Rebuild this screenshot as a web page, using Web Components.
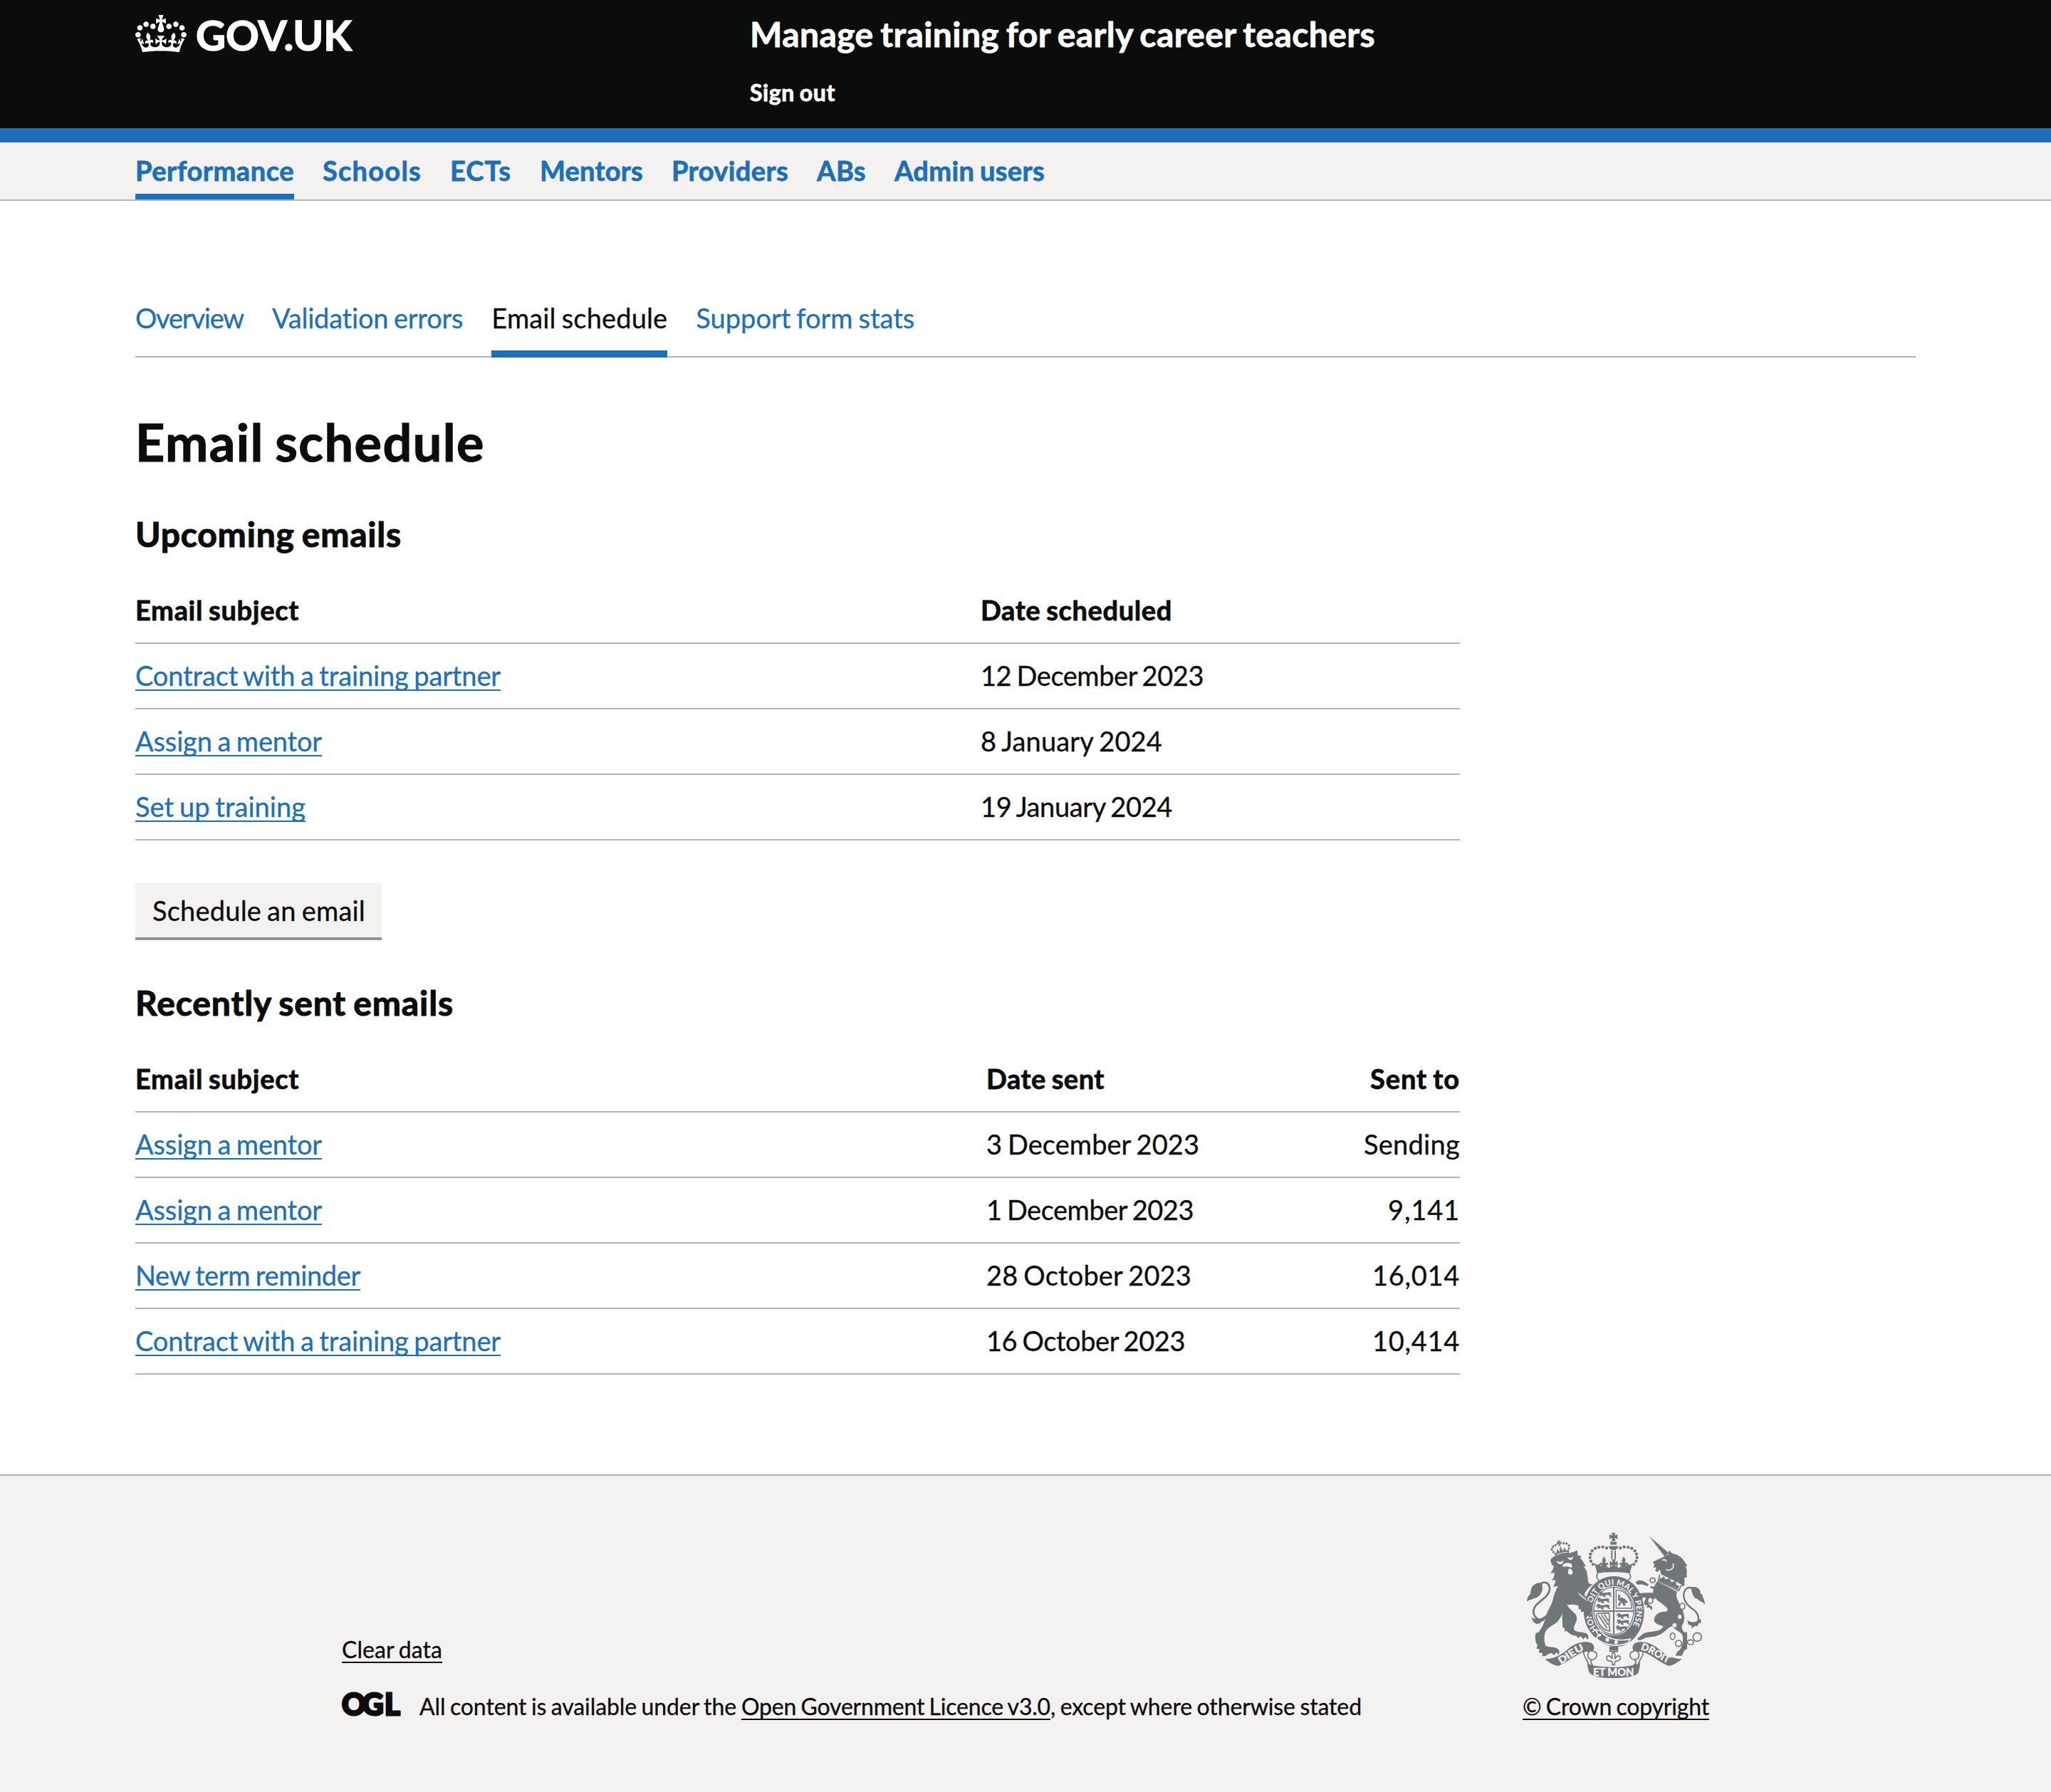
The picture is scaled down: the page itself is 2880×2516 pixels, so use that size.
<!DOCTYPE html>
<html lang="en">
<head>
<meta charset="utf-8">
<title>Email schedule - Manage training for early career teachers</title>
<style>
  html, body { margin: 0; padding: 0; background: #fff; }
  body { font-family: Lato, "Noto Sans", sans-serif; font-size: 38px; line-height: 50px; color: #0b0c0c; }
</style>
</head>
<body>
<app-page></app-page>

<script>
const define = (name, html, setup) => {
  const template = document.createElement('template');
  template.innerHTML = html;
  customElements.define(name, class extends HTMLElement {
    connectedCallback() {
      if (this.shadowRoot) return;
      this.attachShadow({ mode: 'open' }).append(template.content.cloneNode(true));
      if (setup) setup(this);
    }
  });
};

/* Text run tracked so that it fills a set measure. */
define('tracked-text', `
<style>
  :host { display: inline-block; white-space: nowrap; padding-top: 1px; margin-bottom: -1px; word-spacing: -.05em; -webkit-text-stroke: var(--weight, .3px) currentColor; }
  :host([link]) { color: #1d70b8; }
  :host([underline]) { text-decoration: underline; text-decoration-thickness: 2px; text-underline-offset: 5px; text-decoration-skip-ink: none; }
</style><slot></slot>`, el => {
  const target = Number(el.getAttribute('measure'));
  if (!target) return;
  const natural = el.getBoundingClientRect().width;
  const count = el.textContent.length;
  el.style.letterSpacing = ((target - natural) / count).toFixed(3) + 'px';
});

define('gov-logo', `
<style>:host { display: block; width: 310px; height: 54px; } svg { display: block; overflow: visible; }</style>
<svg width="310" height="54" viewBox="0 0 310 54" fill="#fff">
  <g transform="scale(.5455)"><path d="M25 30.2c3.5 1.5 7.7-.2 9.1-3.7 1.5-3.6-.2-7.8-3.9-9.2-3.6-1.4-7.6.3-9.1 3.9-1.4 3.5.3 7.5 3.9 9zM9 39.5c3.6 1.5 7.8-.2 9.2-3.7 1.5-3.6-.2-7.8-3.9-9.1-3.6-1.5-7.6.2-9.1 3.8-1.4 3.5.3 7.5 3.8 9zM4.4 57.2c3.5 1.5 7.7-.2 9.1-3.8 1.5-3.6-.2-7.7-3.9-9.1-3.5-1.5-7.6.3-9.1 3.8-1.4 3.5.3 7.6 3.9 9.1zm38.3-21.4c3.5 1.5 7.7-.2 9.1-3.8 1.5-3.6-.2-7.7-3.9-9.1-3.6-1.5-7.6.3-9.1 3.8-1.3 3.6.4 7.7 3.9 9.1zm64.4-5.6c-3.6 1.5-7.8-.2-9.1-3.7-1.5-3.6.2-7.8 3.8-9.2 3.6-1.4 7.7.3 9.2 3.9 1.3 3.5-.4 7.5-3.9 9zm15.9 9.3c-3.6 1.5-7.7-.2-9.1-3.7-1.5-3.6.2-7.8 3.7-9.1 3.6-1.5 7.7.2 9.2 3.8 1.5 3.5-.3 7.5-3.8 9zm4.7 17.7c-3.6 1.5-7.8-.2-9.2-3.8-1.5-3.6.2-7.7 3.9-9.1 3.6-1.5 7.7.3 9.2 3.8 1.3 3.5-.4 7.6-3.9 9.1zM89.3 35.8c-3.6 1.5-7.8-.2-9.2-3.8-1.4-3.6.2-7.7 3.9-9.1 3.6-1.5 7.7.3 9.2 3.8 1.4 3.6-.3 7.7-3.9 9.1zM69.7 17.7l8.9 4.7V9.3l-8.9 2.8c-.2-.3-.5-.6-.9-.9L72.4 0H59.6l3.5 11.2c-.3.3-.6.5-.9.9l-8.8-2.8v13.1l8.8-4.7c.3.3.6.7.9.9l-5 15.4v.1c-.2.8-.4 1.6-.4 2.4 0 4.1 3.1 7.5 7 8.1h.2c.3 0 .7.1 1 .1.4 0 .7 0 1-.1h.2c4-.6 7.1-4.1 7.1-8.1 0-.8-.1-1.7-.4-2.4V34l-5.1-15.4c.4-.2.7-.6 1-.9zM66 92.8c16.9 0 32.8 1.1 47.1 3.2 4-16.9 8.9-26.7 14-33.5l-9.6-3.4c1 4.9 1.1 7.2 0 10.2-1.5-1.4-3-4.3-4.2-8.7L108.6 76c2.8-2 5-3.2 7.5-3.3-4.4 9.4-10 11.9-13.6 11.2-4.3-.8-6.3-4.6-5.6-7.9 1-4.7 5.7-5.9 8-.5 4.3-8.7-3-11.4-7.6-8.8 7.1-7.2 7.9-13.5 2.1-21.1-8 6.1-8.1 12.3-4.5 20.8-4.7-5.4-12.1-2.5-9.5 6.2 3.4-5.2 7.9-2 7.2 3.1-.6 4.3-6.4 7.8-13.5 7.2-10.3-.9-10.9-8-11.2-13.8 2.5-.5 7.1 1.8 11 7.3L80.2 60c-4.1 4.4-8 5.3-12.3 5.4 1.4-4.4 8-11.6 8-11.6H55.5s6.4 7.2 7.9 11.6c-4.2-.1-8-1-12.3-5.4l1.4 16.4c3.9-5.5 8.5-7.7 10.9-7.3-.3 5.8-.9 12.8-11.1 13.8-7.2.6-12.9-2.9-13.5-7.2-.7-5 3.8-8.3 7.1-3.1 2.7-8.7-4.6-11.6-9.4-6.2 3.7-8.5 3.6-14.7-4.6-20.8-5.8 7.6-5 13.9 2.2 21.1-4.7-2.6-11.9.1-7.7 8.8 2.3-5.5 7.1-4.2 8.1.5.7 3.3-1.3 7.1-5.7 7.9-3.5.7-9-1.8-13.5-11.2 2.5.1 4.7 1.3 7.5 3.3l-4.7-15.4c-1.2 4.4-2.7 7.2-4.3 8.7-1.1-3-.9-5.3 0-10.2l-9.5 3.4c5 6.9 9.9 16.7 14 33.5 14.8-2.1 30.8-3.2 47.7-3.2z"/></g>
  <text x="85" y="50" font-family="Lato, sans-serif" font-weight="700" font-size="57.5" textLength="219" lengthAdjust="spacingAndGlyphs" stroke="#fff" stroke-width="1.5">GOV.UK</text>
</svg>`);

define('gov-header', `
<style>
  :host { display: flex; box-sizing: border-box; height: 200px; padding: 0 190px; background: #0b0c0c; border-bottom: 20px solid #1d70b8; color: #fff; font-weight: 700; --weight: .8px; }
  .logo { width: 863px; padding-top: 21px; }
  .service { display: flex; flex-direction: column; align-items: flex-start; gap: 32px; padding-top: 17px; font-size: 48px; line-height: 60px; }
  .sub { font-size: 32px; line-height: 40px; }
</style>
<div class="logo"><gov-logo></gov-logo></div>
<div class="service">
  <tracked-text measure="878">Manage training for early career teachers</tracked-text>
  <tracked-text class="sub" measure="120">Sign out</tracked-text>
</div>`);

define('primary-nav', `
<style>
  :host { display: flex; gap: 40px; box-sizing: border-box; height: 82px; padding: 0 190px; background: #f3f2f1; border-bottom: 2px solid #b1b4b6; font-weight: 700; --weight: .8px; }
</style><slot></slot>`);

define('nav-item', `
<style>
  :host { display: block; box-sizing: border-box; height: 80px; padding-top: 13px; border-bottom: 8px solid transparent; color: #1d70b8; white-space: nowrap; }
  :host([current]) { border-color: #1d70b8; }
</style><slot></slot>`);

define('sub-nav', `
<style>:host { display: flex; gap: 40px; border-bottom: 2px solid #b1b4b6; }</style><slot></slot>`);

define('sub-item', `
<style>
  :host { display: block; height: 72px; margin-bottom: -2px; border-bottom: 10px solid transparent; color: #1d70b8; }
  :host([current]) { color: #0b0c0c; border-color: #1d70b8; }
</style><slot></slot>`);

define('data-table', `
<style>:host { display: block; width: 1860px; margin-top: 51px; }</style><slot></slot>`);

define('table-row', `
<style>
  :host { display: grid; box-sizing: border-box; height: 92px; grid-template-columns: var(--columns); padding-top: 18px; border-bottom: 2px solid #b1b4b6; }
  :host([head]) { height: 74px; padding-top: 0; font-weight: 700; --weight: .8px; }
  ::slotted(*) { justify-self: start; }
  ::slotted([end]) { justify-self: end; }
</style><slot></slot>`);

define('action-button', `
<style>
  :host { display: block; box-sizing: border-box; width: 346px; height: 80px; padding: 12px 24px 0; background: #f3f2f1; border-bottom: 4px solid #929191; }
</style><slot></slot>`);

define('ogl-logo', `
<style>:host { display: block; width: 82px; height: 34px; } svg { display: block; overflow: visible; }</style>
<svg width="82" height="34" viewBox="0 0 82 34">
  <text x="0 28.5 60" y="31.8" font-family="Lato, sans-serif" font-weight="900" font-size="41.5" fill="#0b0c0c" stroke="#0b0c0c" stroke-width="3">OGL</text>
</svg>`);

define('royal-arms', `
<style>:host { display: block; width: 250px; height: 204px; } svg { display: block; }</style>
<svg width="250" height="204" viewBox="72 66 750 612" fill="#6f777b">
  <defs>
    <path id="motto" d="M371 474A95 110 0 1 1 511 467"/>
    <path id="dieu" d="M215 620C252 600 284 566 326 558"/>
    <path id="droit" d="M550 558C590 566 630 602 672 618"/>
    <path id="fleur" d="M0-24C9-12 9-4 4 6C14-2 20 4 17 12L10 10C10 15 14 19 20 22H-20C-14 19-10 15-10 10L-17 12C-20 4-14-2-4 6C-9-4-9-12 0-24Z"/>
    <path id="cross" d="M-9-18H9L4-5L17-10V10L4 5L9 18H-9L-4 5L-17 10V-10L-4-5Z"/>
    <path id="beast" d="M2 4L16 2L22 8L50 4L56 10L52 16L60 22L50 22L44 15L30 17L34 25L24 25L20 18L8 22L10 14L0 14L8 9Z"/>
    <g id="scroll">
      <path d="M148 598C190 598 225 575 250 552C275 532 310 520 340 529C358 536 359 556 350 566L314 568C285 575 245 610 205 627C182 624 165 612 148 598Z"/>
      <path d="M312 567C308 590 328 595 332 622M350 565C378 572 366 596 350 600C336 606 342 618 350 624M336 567C324 575 326 598 346 601" fill="none" stroke="#6f777b" stroke-width="5"/>
    </g>
  </defs>

  <!-- lion -->
  <path d="M135 437C100 428 92 400 108 375C125 350 166 338 168 303C168 276 148 270 128 280" fill="none" stroke="#6f777b" stroke-width="8"/>
  <path d="M138 278C112 272 94 290 92 298C88 306 92 312 84 318L90 320C80 330 72 340 72 357C82 345 96 350 98 343C112 344 128 332 134 316C142 302 134 292 138 278Z"/>
  <path d="M90 420C100 432 130 436 158 408C154 430 144 438 134 440C124 452 116 448 112 450C104 444 98 446 90 420Z"/>
  <path d="M172 182C176 168 190 161 215 158C240 155 262 150 285 140L286 160L303 166L296 172C308 182 312 196 322 208L310 208C322 220 326 230 326 242C330 258 328 268 334 280L350 284C335 292 325 305 314 325C320 340 335 350 345 362C346 380 340 400 344 412L336 424L330 414L320 424L312 412L314 396L302 402L300 388L292 390L294 376C285 370 270 366 241 370C250 385 262 395 270 402C282 410 285 425 280 440C274 455 266 462 272 476C285 486 300 482 318 488C330 492 335 502 328 517L318 504L310 516L300 502L288 510L280 500C262 500 250 490 240 480L230 482L232 470L222 462C224 440 218 425 222 405C216 420 206 440 190 450C170 462 150 472 147 495C144 515 146 530 152 542C165 550 180 544 198 552C212 560 210 572 206 580L196 570L186 582L176 572L160 578L150 586L136 586L138 574L123 570L124 556L112 554L117 540C107 530 105 500 110 488L120 486C135 470 148 440 152 420C155 400 172 380 180 355C185 335 190 310 205 290L182 294C190 285 192 275 192 265L176 266C188 255 188 245 188 235L172 236C182 222 184 215 186 205C176 205 174 192 172 182Z"/>
  <g fill="#f3f2f1">
    <path d="M197 183C208 192 220 190 228 180L222 196C210 202 200 196 197 183Z"/>
    <path d="M242 167C252 174 262 172 268 164L264 178C254 184 246 178 242 167Z"/>
    <path d="M222 202C236 190 252 190 262 200L262 214L242 208L226 210Z"/>
    <path d="M248 218C262 216 270 232 262 241C252 246 242 238 246 228Z"/>
  </g>
  <g transform="rotate(-13 218 135)">
    <use href="#cross" transform="translate(214 108) scale(.6)"/>
    <g><circle cx="197" cy="113" r="5"/><circle cx="185" cy="117" r="5"/><circle cx="178" cy="127" r="5"/><circle cx="182" cy="139" r="5"/><circle cx="232" cy="113" r="5"/><circle cx="244" cy="117" r="5"/><circle cx="252" cy="127" r="5"/><circle cx="249" cy="139" r="5"/></g>
    <path d="M184 143L194 146L200 130L208 145L215 120L222 145L231 130L236 146L248 143L243 164C225 158 207 158 188 164Z"/>
    <path d="M193 154C207 150 224 150 240 154" fill="none" stroke="#f3f2f1" stroke-width="3"/>
  </g>

  <!-- imperial crown -->
  <use href="#cross" transform="translate(437 83)"/>
  <path d="M424 104H450V116H424ZM417 122H457C456 134 446 139 437 139S418 134 417 122Z"/>
  <path d="M430 140V176M444 140V176" stroke="#6f777b" stroke-width="6"/>
  <g id="pearls">
    <circle cx="408" cy="130" r="6.5"/><circle cx="392" cy="126" r="6.5"/><circle cx="375" cy="127" r="6.5"/><circle cx="360" cy="132" r="6.5"/><circle cx="347" cy="142" r="6.5"/><circle cx="340" cy="156" r="6.5"/><circle cx="338" cy="171" r="6.5"/><circle cx="342" cy="186" r="6.5"/><circle cx="351" cy="199" r="6.5"/>
  </g>
  <use href="#pearls" transform="matrix(-1 0 0 1 874 0)"/>
  <use href="#fleur" transform="translate(397 190)"/><use href="#fleur" transform="translate(480 190)"/><use href="#cross" transform="translate(438 196)"/>
  <path d="M358 195L370 202L380 196L384 210L420 214L424 206H452L456 214L492 210L496 196L506 202L517 195C514 210 508 224 506 238C480 230 394 230 368 238C366 224 360 210 358 195Z"/>
  <path d="M371 238C362 250 366 258 376 266M503 238C514 250 510 258 498 266" fill="none" stroke="#6f777b" stroke-width="5"/>

  <!-- garter and shield -->
  <path fill-rule="evenodd" d="M438 249C510 249 566 312 566 398C566 480 510 546 450 546C380 546 312 480 312 398C312 312 366 249 438 249ZM438 290C388 290 349 336 349 396C349 456 388 498 438 498C488 498 527 456 527 396C527 336 488 290 438 290Z"/>
  <path d="M352 396H524M438 294V496" stroke="#6f777b" stroke-width="6"/>
  <ellipse cx="438" cy="395" rx="84" ry="99" fill="none" stroke="#6f777b" stroke-width="4"/>
  <use href="#beast" transform="translate(372 312)"/><use href="#beast" transform="translate(364 338)"/><use href="#beast" transform="translate(360 364) scale(1.1 1)"/>
  <use href="#beast" transform="translate(447 403)"/><use href="#beast" transform="translate(447 429)"/><use href="#beast" transform="translate(444 455) scale(.9 1)"/>
  <path d="M448 308C485 306 512 340 514 384H448Z" fill="none" stroke="#6f777b" stroke-width="4"/>
  <path d="M456 326L466 330L462 342L472 338L484 344L498 358L492 364L484 358L488 374L478 372L472 358L460 378L456 368L466 354L456 350Z"/>
  <path d="M364 412L372 406L418 404C424 430 414 450 422 480C396 480 368 450 364 412ZM374 414L410 468M386 412L414 454M398 410L416 438" fill="none" stroke="#6f777b" stroke-width="5"/>
  <path d="M364 480L380 476L392 492C430 522 470 522 508 514L500 528C460 548 410 540 374 520L364 508L374 500Z" stroke="#f3f2f1" stroke-width="5"/>
  <g fill="#f3f2f1"><circle cx="411" cy="517" r="8"/><circle cx="448" cy="527" r="8"/><circle cx="379" cy="497" r="6"/></g>
  <text font-family="Lato, sans-serif" font-weight="900" font-size="34" fill="#f3f2f1"><textPath href="#motto" textLength="468" lengthAdjust="spacingAndGlyphs">HONI SOIT QUI MAL Y PENSE</textPath></text>
  <path d="M288 330C312 340 338 350 346 368C350 390 338 398 344 414L336 424L330 414L320 426L312 412L314 396L300 400L300 384L290 386Z"/>
  <path d="M285 315L318 342L328 356L296 330Z" fill="#f3f2f1"/>

  <!-- unicorn -->
  <path d="M587 80L671 152L652 166Z"/>
  <path d="M602 190C620 178 640 174 652 165L668 158L670 140L686 154C706 158 724 168 733 184L748 205L740 208C750 222 744 236 746 256L736 254C738 270 734 280 736 290L722 290L640 245C632 240 640 222 628 222L625 232L612 226L618 212L604 212L610 200Z"/>
  <path d="M642 182C650 178 656 180 660 186M688 196C694 214 680 228 658 222" fill="none" stroke="#f3f2f1" stroke-width="5"/>
  <path d="M628 236L724 284L714 312L624 268Z" fill="#f3f2f1"/>
  <path d="M632 242L626 268L712 310L722 288" fill="none" stroke="#6f777b" stroke-width="5"/>
  <path d="M632 258L644 256L648 248L656 262L668 260L674 256L680 274L692 272L698 268L702 286L714 290L708 304L630 268Z"/>
  <path d="M622 270C608 288 602 302 604 325C612 350 640 362 660 380C670 392 665 399 652 398C628 398 610 412 608 432C608 450 630 454 646 460C642 474 625 480 600 482C575 484 562 488 552 500L538 510L540 518L552 518L575 508C590 504 600 506 620 500C650 490 660 470 682 460C700 478 724 484 728 500C732 520 728 545 715 560L706 566L698 584H725L735 562L747 556V485H735C722 470 722 460 732 445C740 420 732 400 718 370C705 345 696 330 706 315Z"/>
  <path d="M608 302C592 302 578 288 562 285C552 281 546 288 534 282L531 274L541 267C556 264 574 276 587 284C596 292 604 294 612 294Z"/>
  <path d="M606 320C590 318 572 318 548 321L541 328L546 350L558 348L560 338L574 340C570 352 562 360 568 370L580 372L576 382L586 380L600 392V378C590 372 582 366 580 358C586 346 596 344 612 346Z"/>
  <path d="M782 450C806 436 794 402 770 387C744 370 730 345 733 322C738 298 755 293 770 300" fill="none" stroke="#6f777b" stroke-width="7"/>
  <path d="M764 296C788 288 804 304 804 322L812 330C814 342 822 350 822 368C810 352 798 356 790 344C776 344 766 322 764 296Z"/>
  <path d="M748 434C764 446 784 446 804 428L806 444L796 448L790 460L780 458L768 468L764 456L752 452Z"/>
  <g fill="none" stroke="#6f777b" stroke-width="5">
    <ellipse cx="602" cy="266" rx="11" ry="10"/><ellipse cx="592" cy="351" rx="11" ry="13" fill="#f3f2f1"/><ellipse cx="727" cy="376" rx="11" ry="13" fill="#f3f2f1"/><ellipse cx="686" cy="502" rx="10" ry="14"/><circle cx="711" cy="532" r="13" fill="#f3f2f1"/><ellipse cx="761" cy="527" rx="13" ry="10"/><circle cx="790" cy="505" r="18"/>
  </g>
  <g fill="#f3f2f1"><ellipse cx="716" cy="420" rx="8" ry="9"/><circle cx="694" cy="456" r="9"/><circle cx="587" cy="292" r="7"/></g>

  <!-- motto scroll -->
  <use href="#scroll"/><use href="#scroll" transform="matrix(-1 0 0 1 873 0)"/>
  <path d="M326 616C360 638 514 638 549 612C548 630 546 642 541 656C530 672 485 678 437 678S348 672 336 656C330 644 328 630 326 616Z"/>
  <path d="M422 548H454V566H422ZM437 566C445 578 446 586 442 598C452 580 466 582 466 594C466 604 458 608 448 606L442 612V622H432V612L426 606C416 608 408 604 408 594C408 582 422 580 432 598C428 586 429 578 437 566Z" fill="#f3f2f1" stroke="#6f777b" stroke-width="5"/>
  <path d="M422 548H454V562H422Z"/>
  <g font-family="Lato, sans-serif" font-weight="900" font-size="41" fill="#f3f2f1" stroke="#f3f2f1" stroke-width="1">
    <text><textPath href="#dieu" textLength="116" lengthAdjust="spacingAndGlyphs">DIEU</textPath></text>
    <text x="351" y="669" textLength="172" lengthAdjust="spacingAndGlyphs" font-size="44">ET MON</text>
    <text><textPath href="#droit" textLength="130" lengthAdjust="spacingAndGlyphs">DROIT</textPath></text>
  </g>
</svg>`);

define('gov-footer', `
<style>
  :host { display: flex; justify-content: space-between; box-sizing: border-box; height: 446px; margin-top: 140px; padding: 80px 480px 0; background: #f3f2f1; border-top: 2px solid #b1b4b6; font-size: 32px; line-height: 40px; }
  .meta { display: flex; flex-direction: column; gap: 40px; align-items: flex-start; padding-top: 143px; }
  .licence { display: flex; }
  ogl-logo { padding-top: 1px; margin-right: 27px; }
  .text { white-space: pre; display: flex; }
  .lead { margin-right: 7px; }
  .copyright { display: flex; flex-direction: column; align-items: center; gap: 19px; }
</style>
<div class="meta">
  <tracked-text underline measure="141">Clear data</tracked-text>
  <div class="licence"><ogl-logo></ogl-logo>
    <div class="text"><tracked-text class="lead" measure="445">All content is available under the</tracked-text><tracked-text underline measure="434">Open Government Licence v3.0</tracked-text><tracked-text measure="437">, except where otherwise stated</tracked-text></div>
  </div>
</div>
<div class="copyright">
  <royal-arms></royal-arms>
  <tracked-text underline measure="262">© Crown copyright</tracked-text>
</div>`);

define('app-page', `
<style>
  :host { display: block; width: 2880px; }
  main { padding: 138px 190px 0; }
  h1, h2 { --weight: 1.1px; }
  h1 { margin: 77px 0 0; font-size: 72px; line-height: 80px; height: 80px; }
  h2 { margin: 60px 0 0; font-size: 48px; line-height: 60px; height: 60px; }
  .sent { margin-top: 57px; }
  action-button { margin-top: 60px; }
  .upcoming { --columns: 1187px 1fr; }
  .recent { --columns: 1195px 1fr auto; }
</style>
<gov-header></gov-header>
<primary-nav>
  <nav-item current><tracked-text measure="223">Performance</tracked-text></nav-item>
  <nav-item><tracked-text measure="139">Schools</tracked-text></nav-item>
  <nav-item><tracked-text measure="86">ECTs</tracked-text></nav-item>
  <nav-item><tracked-text measure="145">Mentors</tracked-text></nav-item>
  <nav-item><tracked-text measure="164">Providers</tracked-text></nav-item>
  <nav-item><tracked-text measure="69">ABs</tracked-text></nav-item>
  <nav-item><tracked-text measure="211">Admin users</tracked-text></nav-item>
</primary-nav>
<main>
  <sub-nav>
    <sub-item><tracked-text measure="152">Overview</tracked-text></sub-item>
    <sub-item><tracked-text measure="269">Validation errors</tracked-text></sub-item>
    <sub-item current><tracked-text measure="247">Email schedule</tracked-text></sub-item>
    <sub-item><tracked-text measure="307">Support form stats</tracked-text></sub-item>
  </sub-nav>
  <h1><tracked-text measure="491">Email schedule</tracked-text></h1>
  <h2><tracked-text measure="374">Upcoming emails</tracked-text></h2>
  <data-table class="upcoming">
    <table-row head><tracked-text measure="230">Email subject</tracked-text><tracked-text measure="269">Date scheduled</tracked-text></table-row>
    <table-row><tracked-text link underline measure="513">Contract with a training partner</tracked-text><tracked-text measure="313">12 December 2023</tracked-text></table-row>
    <table-row><tracked-text link underline measure="262">Assign a mentor</tracked-text><tracked-text measure="255">8 January 2024</tracked-text></table-row>
    <table-row><tracked-text link underline measure="239">Set up training</tracked-text><tracked-text measure="269">19 January 2024</tracked-text></table-row>
  </data-table>
  <action-button><tracked-text measure="299">Schedule an email</tracked-text></action-button>
  <h2 class="sent"><tracked-text measure="447">Recently sent emails</tracked-text></h2>
  <data-table class="recent">
    <table-row head><tracked-text measure="230">Email subject</tracked-text><tracked-text measure="166">Date sent</tracked-text><tracked-text end measure="126">Sent to</tracked-text></table-row>
    <table-row><tracked-text link underline measure="262">Assign a mentor</tracked-text><tracked-text measure="299">3 December 2023</tracked-text><tracked-text end measure="135">Sending</tracked-text></table-row>
    <table-row><tracked-text link underline measure="262">Assign a mentor</tracked-text><tracked-text measure="291">1 December 2023</tracked-text><tracked-text end measure="101">9,141</tracked-text></table-row>
    <table-row><tracked-text link underline measure="316">New term reminder</tracked-text><tracked-text measure="288">28 October 2023</tracked-text><tracked-text end measure="123">16,014</tracked-text></table-row>
    <table-row><tracked-text link underline measure="513">Contract with a training partner</tracked-text><tracked-text measure="279">16 October 2023</tracked-text><tracked-text end measure="123">10,414</tracked-text></table-row>
  </data-table>
</main>
<gov-footer></gov-footer>`);
</script>
</body>
</html>
